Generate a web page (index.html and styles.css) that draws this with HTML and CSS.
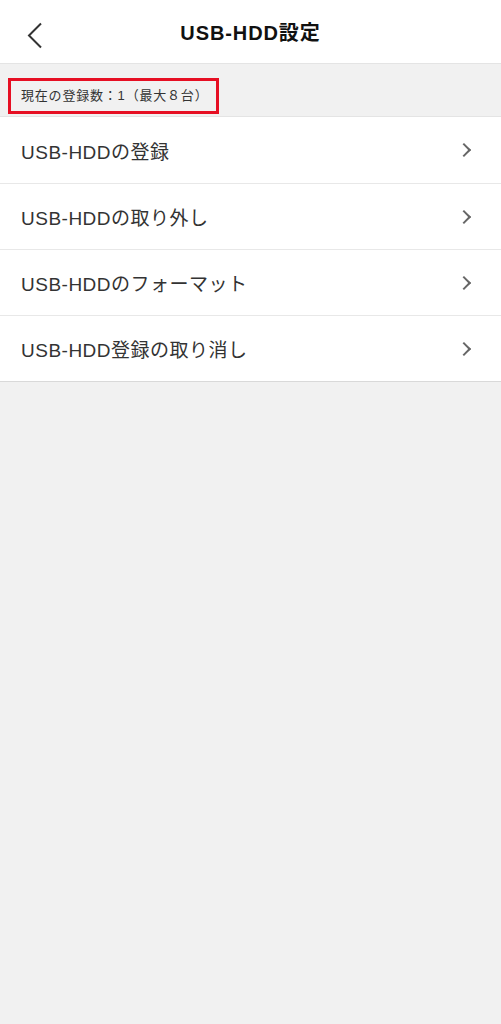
FILE: index.html
```html
<!DOCTYPE html>
<html lang="ja">
<head>
    <meta charset="UTF-8">
    <meta name="viewport" content="width=device-width, initial-scale=1.0">
    <title>USB-HDD設定</title>
    <link rel="stylesheet" href="styles.css">
</head>
<body>
    <!-- Top navigation bar -->
    <div class="navbar">
        <a class="back" href="#" aria-label="戻る">
            <svg width="16" height="27" viewBox="0 0 16 27">
                <polyline points="14,1.5 2,13.5 14,25.5" fill="none" stroke="#333" stroke-width="2"/>
            </svg>
        </a>
        <h1 class="title">USB-HDD設定</h1>
    </div>

    <!-- Registered count -->
    <div class="section-head">
        <span class="count">現在の登録数：1（最大８台）</span>
    </div>

    <!-- Menu list -->
    <ul class="menu">
        <li class="menu-item"><span>USB-HDDの登録</span><i class="chevron"></i></li>
        <li class="menu-item"><span>USB-HDDの取り外し</span><i class="chevron"></i></li>
        <li class="menu-item"><span>USB-HDDのフォーマット</span><i class="chevron"></i></li>
        <li class="menu-item"><span>USB-HDD登録の取り消し</span><i class="chevron"></i></li>
    </ul>
</body>
</html>
```

FILE: styles.css
```css
/* USB-HDD settings screen */
body {
    margin: 0;
    min-height: 100vh;
    background-color: #f1f1f1;
    font-family: "Liberation Sans", "Noto Sans CJK JP", sans-serif;
    color: #333;
}

.navbar {
    position: relative;
    height: 63px;
    background-color: #fff;
    display: flex;
    align-items: center;
    justify-content: center;
}

.back {
    position: absolute;
    left: 27px;
    top: 22px;
    display: block;
    line-height: 0;
}

.title {
    margin: 0;
    font-size: 20px;
    font-weight: bold;
    letter-spacing: 0.9px;
    color: #111;
}

.section-head {
    height: 54px;
    padding: 14px 0 0 8px;
    box-sizing: border-box;
    border-top: 1px solid #e4e4e4;
    border-bottom: 1px solid #e4e4e4;
}

.count {
    display: inline-block;
    height: 36px;
    line-height: 30px;
    padding: 0 8px 0 10px;
    box-sizing: border-box;
    border: 3px solid #e60f23;
    font-size: 13px;
    letter-spacing: 0.8px;
    color: #333;
}

.menu {
    list-style: none;
    margin: 0;
    padding: 0;
    background-color: #fff;
    border-bottom: 1px solid #d9d9d9;
}

.menu-item {
    height: 66px;
    padding: 0 32px 0 21px;
    box-sizing: border-box;
    display: flex;
    align-items: center;
    justify-content: space-between;
    border-top: 1px solid #e8e8e8;
    font-size: 19px;
    letter-spacing: 0.5px;
}

.menu-item:first-child {
    border-top: none;
}

.chevron {
    width: 8px;
    height: 8px;
    border-top: 2px solid #666;
    border-right: 2px solid #666;
    transform: rotate(45deg);
}
```
